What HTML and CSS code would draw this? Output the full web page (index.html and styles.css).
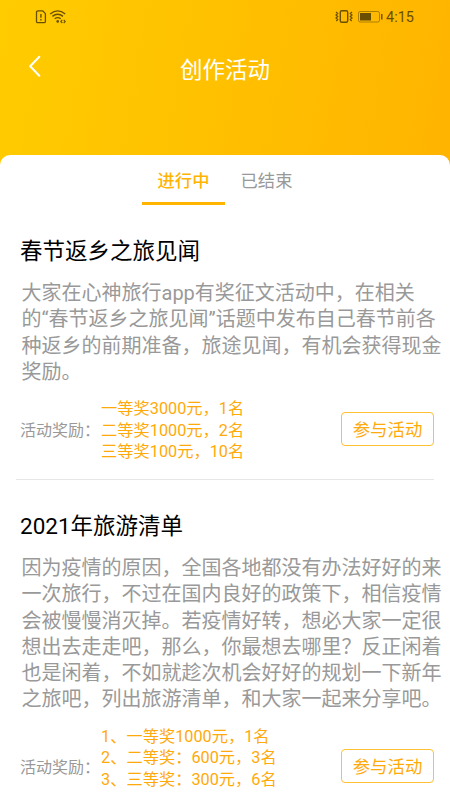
FILE: index.html
```html
<!DOCTYPE html>
<html lang="zh-CN">
<head>
<meta charset="utf-8">
<title>创作活动</title>
<link rel="stylesheet" href="styles.css">
</head>
<body>
<header class="hero">
  <div class="status">
    <svg class="status-left" width="32" height="16" viewBox="0 0 32 16" fill="none" stroke="currentColor">
      <path d="M3.2 2.8h4.4l2.8 2.8v7.8q0 1.3-1.3 1.3H2.8q-1.3 0-1.3-1.3V4.6q0-1.8 1.7-1.8z" stroke-width="1.3" stroke-linejoin="round"/>
      <path d="M5.9 6v3.8M5.9 11v1.5" stroke-width="1.4"/>
      <path d="M15.2 6q7.5-6.2 15 0M17.4 8.4q5.3-4.3 10.6 0M19.7 10.7q3-2.2 6 0" stroke-width="1.4"/>
      <circle cx="22.7" cy="13.4" r="1.3" fill="currentColor" stroke="none"/>
      <path d="M27.3 11.8l-1.5 1.6 1.5 1.6M28.7 11.8l1.5 1.6-1.5 1.6" stroke-width="1.1"/>
    </svg>
    <div class="status-right">
      <svg width="48" height="16" viewBox="0 0 48 16" fill="none" stroke="currentColor">
        <rect x="5.3" y="2.7" width="7.4" height="11.6" rx="1.5" stroke-width="1.4"/>
        <path d="M1 4l1.7 1.5L1 7l1.7 1.5L1 10l1.7 1.5L1.3 13M17 4l-1.7 1.5L17 7l-1.7 1.5L17 10l-1.7 1.5 1.4 1.5" stroke-width="1.2"/>
        <rect x="23.5" y="3.5" width="21" height="10.5" rx="1.7" opacity=".55"/>
        <rect x="25" y="5" width="11" height="7.5" fill="currentColor" stroke="none"/>
        <path d="M46.8 6v5.5" stroke-width="1.4"/>
      </svg>
      <span class="time">4:15</span>
    </div>
  </div>
  <div class="navbar">
    <svg class="back" width="14" height="22" viewBox="0 0 14 22" fill="none" stroke="currentColor" stroke-width="2">
      <path d="M11.3 1.7L2.2 11.2 11.3 20.7" stroke-linecap="round" stroke-linejoin="round"/>
    </svg>
    <h1 class="title">创作活动</h1>
  </div>
</header>
<main class="sheet">
  <nav class="tabs">
    <span class="tab active">进行中</span>
    <span class="tab">已结束</span>
  </nav>
  <section class="card">
    <h2 class="name">春节返乡之旅见闻</h2>
    <p class="desc">大家在心神旅行app有奖征文活动中，在相关<br>的“春节返乡之旅见闻”话题中发布自己春节前各<br>种返乡的前期准备，旅途见闻，有机会获得现金<br>奖励。</p>
    <div class="foot">
      <span class="label">活动奖励：</span>
      <div class="prizes">一等奖3000元，1名<br>二等奖1000元，2名<br>三等奖100元，10名</div>
      <span class="join">参与活动</span>
    </div>
  </section>
  <section class="card">
    <h2 class="name">2021年旅游清单</h2>
    <p class="desc">因为疫情的原因，全国各地都没有办法好好的来<br>一次旅行，不过在国内良好的政策下，相信疫情<br>会被慢慢消灭掉。若疫情好转，想必大家一定很<br>想出去走走吧，那么，你最想去哪里？反正闲着<br>也是闲着，不如就趁次机会好好的规划一下新年<br>之旅吧，列出旅游清单，和大家一起来分享吧。</p>
    <div class="foot">
      <span class="label">活动奖励：</span>
      <div class="prizes">1、一等奖1000元，1名<br>2、二等奖：600元，3名<br>3、三等奖：300元，6名</div>
      <span class="join">参与活动</span>
    </div>
  </section>
</main>
</body>
</html>
```
FILE: styles.css
```css
* { box-sizing: border-box; }
body {
  margin: 0;
  width: 450px;
  height: 800px;
  overflow: hidden;
  background: #fff;
  font-family: Roboto, "Noto Sans CJK SC", sans-serif;
  text-spacing-trim: space-all;
}
.hero {
  height: 180px;
  padding-top: 8px;
  background: linear-gradient(100deg, #ffcc00, #ffb400);
}
.status {
  display: flex;
  justify-content: space-between;
  height: 18px;
  padding: 0 36px 0 35px;
  color: #6b4f00;
}
.status-right { display: flex; gap: 3px; }
.time { font-size: 14.5px; line-height: 20px; }
.navbar {
  display: flex;
  align-items: center;
  height: 86px;
  padding: 0 28px;
  color: #fff;
}
.back { margin-top: -7px; }
.title {
  flex: 1;
  margin: -2px 14px 0 0;
  text-align: center;
  font-size: 22.5px;
  font-weight: 400;
}
.sheet {
  margin-top: -25px;
  height: 645px;
  border-radius: 10px 10px 0 0;
  background: #fff;
}
.tabs { display: flex; justify-content: center; height: 50px; }
.tab {
  width: 83px;
  height: 50px;
  text-align: center;
  font-size: 17.3px;
  line-height: 52px;
  color: #999;
}
.tab.active {
  border-bottom: 3px solid #ffb400;
  color: #ffb400;
  font-weight: 500;
}
.card { height: 275px; margin: 0 16px; padding: 28px 0 0 4px; border-bottom: 1px solid #e6e6e6; }
.card + .card { height: 330px; border: 0; }
.name {
  margin: 0;
  font-size: 22.5px;
  font-weight: 400;
  line-height: 36px;
  color: #000;
}
.desc {
  margin: 11px -12px 0 1.5px;
  font-size: 20px;
  line-height: 26.25px;
  white-space: nowrap;
  color: #999;
}
.foot { display: flex; align-items: center; height: 65px; margin-top: 11px; white-space: nowrap; }
.card + .card .foot { height: 85px; }
.label { width: 81px; padding-top: 4px; font-size: 16px; line-height: 20px; color: #999; }
.prizes { flex: 1; align-self: flex-start; margin-top: 2px; font-size: 16.25px; line-height: 21.7px; color: #ffaa0a; }
.join {
  width: 93px;
  height: 34px;
  border: 1px solid #ffc032;
  border-radius: 4px;
  text-align: center;
  font-size: 17.4px;
  line-height: 34px;
  color: #ffaa0a;
}
```
